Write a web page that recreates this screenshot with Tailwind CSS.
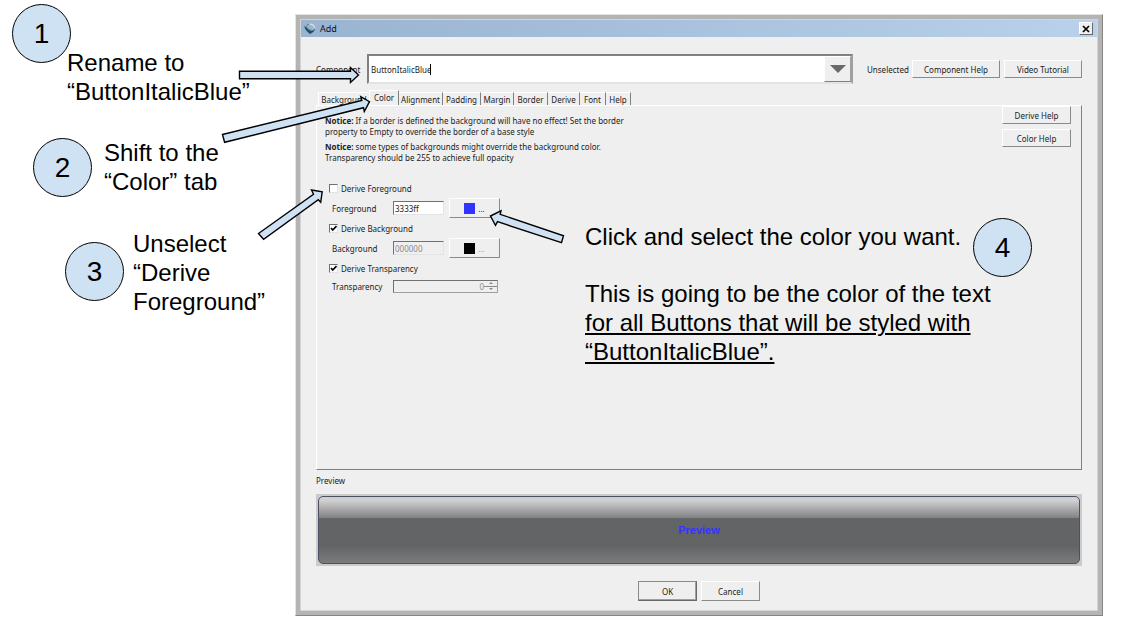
<!DOCTYPE html>
<html lang="en">
<head>
<meta charset="utf-8">
<title>Add</title>
<script src="https://cdn.jsdelivr.net/npm/@tailwindcss/browser@4"></script>
</head>
<body class="bg-white text-black">
<main class="relative flex min-h-screen items-start font-['Liberation_Sans',sans-serif]">

  <!-- Steps 1 to 3 -->
  <ol class="flex w-[295px] shrink-0 flex-col pt-1 text-2xl leading-[29px]">
    <li class="flex h-[134px] items-start pl-3">
      <span class="flex size-[59px] shrink-0 items-center justify-center rounded-full border border-black bg-[#cfe2f3] text-[28px]">1</span>
      <p class="-ml-1 pt-11">Rename to<br>“ButtonItalicBlue”</p>
    </li>
    <li class="flex h-[91px] items-start pl-[33px]">
      <span class="flex size-[59px] shrink-0 items-center justify-center rounded-full border border-black bg-[#cfe2f3] text-[28px]">2</span>
      <p class="pl-3">Shift to the<br>“Color” tab</p>
    </li>
    <li class="flex items-start pl-[65px]">
      <span class="mt-[13px] flex size-[59px] shrink-0 items-center justify-center rounded-full border border-black bg-[#cfe2f3] text-[28px]">3</span>
      <p class="pl-[9px]">Unselect<br>“Derive<br>Foreground”</p>
    </li>
  </ol>

  <!-- Dialog -->
  <section aria-label="Add" class="mt-[14px] mr-5 min-w-0 flex-1 border border-t-[#e3e3e3] border-l-[#e3e3e3] border-r-[#858585] border-b-[#858585] bg-[#b4b4b4] p-1 font-['Noto_Sans',sans-serif] text-[8px] leading-[11px] text-[#222]">
    <div class="border border-[#d4d4d4] bg-[#efefef]">
      <header class="flex h-[17px] items-center bg-linear-to-r from-[#99b4d1] to-[#b9d1ea] pr-1 pl-[3px]">
        <svg class="size-3" viewBox="0 0 12 12" fill="none" aria-hidden="true">
          <path d="M.5 2.800C.3 6 2.500 8.500 6 11 8.500 10 10.500 8.300 11 5.800 9 8 6.500 8.300 4.500 6.500 3 5.200 2 4 .5 2.800Z" fill="#1e4f68"/>
          <path d="M2 3.500C3.500 5.500 5 7 7.500 7" stroke="#4a8ba6"/>
          <path d="M6 1.200C8.500 1 10.300 2.500 10.500 5" stroke="#d9dccf" stroke-width="1.500"/>
          <path d="M2.500 2.500 4.500 1.500" stroke="#4d7186"/>
        </svg>
        <h1 class="ml-1 flex-1 text-[9px] text-[#111]">Add</h1>
        <button aria-label="Close" class="flex h-[13px] w-[14px] items-center justify-center border border-t-white border-l-white border-r-[#696969] border-b-[#696969] bg-[#efefef]">
          <svg class="size-2" viewBox="0 0 8 8" aria-hidden="true"><path d="M1 1 7 7M7 1 1 7" stroke="#000" stroke-width="1.700"/></svg>
        </button>
      </header>

      <div class="px-[15px] pt-[17px] pb-[9px]">
        <div class="flex items-center">
          <label for="component" class="w-[51px]">Component</label>
          <div class="flex h-[30px] min-w-0 flex-1 items-center border-2 border-t-[#808080] border-l-[#808080] border-r-[#a0a0a0] border-b-[#e3e3e3] bg-white">
            <input id="component" value="ButtonItalicBlue" class="h-[11px] w-[62px] border-r border-black bg-white pl-0.5 outline-none">
            <span class="flex-1"></span>
            <button aria-label="Show components" class="flex w-[27px] items-center justify-center self-stretch border border-t-white border-l-white border-r-[#a0a0a0] border-b-[#808080] bg-[#efefef]">
              <svg class="h-2 w-4" viewBox="0 0 16 8" aria-hidden="true"><path d="M0 0H16L8 8Z" fill="#696969"/></svg>
            </button>
          </div>
          <span class="ml-[14px] w-[45px]">Unselected</span>
          <button class="h-[18px] w-[88px] border border-t-white border-l-white border-r-[#8a8a8a] border-b-[#8a8a8a] bg-[#efefef]">Component Help</button>
          <button class="ml-1 h-[18px] w-[78px] border border-t-white border-l-white border-r-[#8a8a8a] border-b-[#8a8a8a] bg-[#efefef]">Video Tutorial</button>
        </div>

        <div role="tablist" class="mt-[6px] flex h-[15px] items-end pl-[2px]">
          <button role="tab" class="h-[13px] w-[51px] border-t border-l border-white">Background</button>
          <button role="tab" aria-selected="true" class="h-[15px] w-[30px] border-t border-l border-r border-t-white border-l-white border-r-[#808080] pb-[2px]">Color</button>
          <button role="tab" class="h-[13px] w-[44px] border-t border-r border-t-white border-r-[#808080]">Alignment</button>
          <button role="tab" class="h-[13px] w-[38px] border-t border-r border-t-white border-r-[#808080]">Padding</button>
          <button role="tab" class="h-[13px] w-[33px] border-t border-r border-t-white border-r-[#808080]">Margin</button>
          <button role="tab" class="h-[13px] w-[34px] border-t border-r border-t-white border-r-[#808080]">Border</button>
          <button role="tab" class="h-[13px] w-[32px] border-t border-r border-t-white border-r-[#808080]">Derive</button>
          <button role="tab" class="h-[13px] w-[26px] border-t border-r border-t-white border-r-[#808080]">Font</button>
          <button role="tab" class="h-[13px] w-[25px] border-t border-r border-t-white border-r-[#808080]">Help</button>
        </div>

        <div role="tabpanel" class="flex min-h-[365px] items-start justify-between border border-t-white border-l-white border-r-[#808080] border-b-[#808080] pr-[10px] pl-2">
          <div class="pt-[9px]">
            <p><b>Notice:</b> If a border is defined the background will have no effect! Set the border<br>property to Empty to override the border of a base style</p>
            <p class="mt-1"><b>Notice:</b> some types of backgrounds might override the background color.<br>Transparency should be 255 to achieve full opacity</p>

            <form class="mt-[15px] pl-1">
              <label class="flex h-5 items-center gap-[3px]">
                <input type="checkbox" class="size-[9px] appearance-none border border-t-[#707070] border-l-[#707070] border-r-[#e3e3e3] border-b-[#e3e3e3] bg-white">Derive Foreground
              </label>
              <div class="flex h-5 items-center pl-[3px]">
                <label for="fg" class="w-[61px]">Foreground</label>
                <input id="fg" value="3333ff" class="h-[14px] w-[51px] border border-t-[#707070] border-l-[#707070] border-r-[#e3e3e3] border-b-[#e3e3e3] bg-white pl-px">
                <button type="button" aria-label="Choose foreground" class="ml-[5px] flex h-5 w-[51px] items-center justify-center gap-[3px] border border-t-white border-l-white border-r-[#8a8a8a] border-b-[#8a8a8a] bg-[#efefef]"><span class="size-[11px] bg-[#3333ff]"></span>...</button>
              </div>
              <label class="flex h-5 items-center gap-[3px]">
                <span class="grid">
                  <input type="checkbox" checked class="peer col-start-1 row-start-1 size-[9px] appearance-none border border-t-[#707070] border-l-[#707070] border-r-[#e3e3e3] border-b-[#e3e3e3] bg-white">
                  <svg class="pointer-events-none col-start-1 row-start-1 hidden size-[9px] peer-checked:block" viewBox="0 0 9 9" fill="none" aria-hidden="true"><path d="M2 4 3.700 6 7.500 2.200" stroke="#000" stroke-width="1.700"/></svg>
                </span>Derive Background
              </label>
              <div class="flex h-5 items-center pl-[3px]">
                <label for="bg" class="w-[61px]">Background</label>
                <input id="bg" value="000000" disabled class="h-[14px] w-[51px] border border-t-[#707070] border-l-[#707070] border-r-[#e3e3e3] border-b-[#e3e3e3] bg-[#efefef] pl-px text-[#8c8c8c]">
                <button type="button" disabled aria-label="Choose background" class="ml-[5px] flex h-5 w-[51px] items-center justify-center gap-[3px] border border-t-white border-l-white border-r-[#8a8a8a] border-b-[#8a8a8a] bg-[#efefef] text-[#a0a0a0]"><span class="size-[11px] bg-black"></span>...</button>
              </div>
              <label class="flex h-5 items-center gap-[3px]">
                <span class="grid">
                  <input type="checkbox" checked class="peer col-start-1 row-start-1 size-[9px] appearance-none border border-t-[#707070] border-l-[#707070] border-r-[#e3e3e3] border-b-[#e3e3e3] bg-white">
                  <svg class="pointer-events-none col-start-1 row-start-1 hidden size-[9px] peer-checked:block" viewBox="0 0 9 9" fill="none" aria-hidden="true"><path d="M2 4 3.700 6 7.500 2.200" stroke="#000" stroke-width="1.700"/></svg>
                </span>Derive Transparency
              </label>
              <div class="flex h-4 items-center pl-[3px]">
                <label for="alpha" class="w-[61px]">Transparency</label>
                <div class="flex h-[13px] w-[105px] border border-t-[#707070] border-l-[#707070] border-r-[#a0a0a0] border-b-[#a0a0a0]">
                  <input id="alpha" value="0" disabled class="min-w-0 flex-1 text-right text-[#8c8c8c]">
                  <div class="flex w-[13px] flex-col">
                    <button type="button" disabled aria-label="Increase" class="flex flex-1 items-center justify-center border-b border-[#8a8a8a]"><svg class="h-[2px] w-1" viewBox="0 0 4 2" aria-hidden="true"><path d="M0 2 2 0 4 2Z" fill="#8a8a8a"/></svg></button>
                    <button type="button" disabled aria-label="Decrease" class="flex flex-1 items-center justify-center"><svg class="h-[2px] w-1" viewBox="0 0 4 2" aria-hidden="true"><path d="M0 0 2 2 4 0Z" fill="#8a8a8a"/></svg></button>
                  </div>
                </div>
              </div>
            </form>
          </div>
          <div class="flex w-[69px] flex-col gap-[5px]">
            <button class="h-[18px] border border-t-white border-l-white border-r-[#8a8a8a] border-b-[#8a8a8a] bg-[#efefef]">Derive Help</button>
            <button class="h-[18px] border border-t-white border-l-white border-r-[#8a8a8a] border-b-[#8a8a8a] bg-[#efefef]">Color Help</button>
          </div>
        </div>

        <h2 class="mt-[5px]">Preview</h2>
        <div class="mt-2 bg-[#cbcbcb] p-[2px]">
          <button class="block h-[68px] w-full rounded-[5px] border border-[#4b5063] bg-[linear-gradient(#d0d0d0_5%,#808184_32%,#636466_32%,#636466_74%,#7a7b7d)] font-['Liberation_Sans',sans-serif] text-[11px] font-bold text-[#3333ff]">Preview</button>
        </div>

        <footer class="mt-[15px] flex justify-center gap-1">
          <button class="h-5 w-[59px] border border-t-[#8a8a8a] border-l-[#8a8a8a] border-r-[#696969] border-b-[#696969] bg-[#efefef] shadow-[inset_-1px_-1px_0_#a0a0a0]">OK</button>
          <button class="h-5 w-[59px] border border-t-white border-l-white border-r-[#8a8a8a] border-b-[#8a8a8a] bg-[#efefef]">Cancel</button>
        </footer>
      </div>
    </div>
  </section>

  <!-- Step 4, laid over the dialog -->
  <div class="absolute top-[218px] left-[585px] flex items-start text-2xl leading-[29px]">
    <div class="w-[420px] pt-1">
      <p>Click and select the color you want.</p>
      <p class="mt-7">This is going to be the color of the text<br><u class="decoration-2 underline-offset-2">for all Buttons that will be styled with</u><br><u class="decoration-2 underline-offset-2">“ButtonItalicBlue”.</u></p>
    </div>
    <span class="-ml-8 flex size-[59px] shrink-0 items-center justify-center rounded-full border border-black bg-[#cfe2f3] text-[28px]">4</span>
  </div>

  <!-- Arrows from the steps to the controls -->
  <svg class="pointer-events-none absolute top-0 left-0" width="1123" height="638" viewBox="0 0 1123 638" fill="#cfe2f3" stroke="#000" stroke-width="1.400" aria-hidden="true">
    <path d="M239.500 71.300H350.500V67.500L358.500 75 350.500 82.500V78.700H239.500Z"/>
    <path d="M222.500 134.500 361.800 100.500 360.800 96.700 369.500 101.700 364.300 111.500 363.500 107.700 224.600 142.300Z"/>
    <path d="M258.500 233.500 313.500 194.300 311.500 190 322.200 191.800 320.700 202.300 318.300 199.700 263.600 239.300Z"/>
    <path d="M490.500 216 501 210.800 500.200 214.300 563.500 235.800 561.500 242.700 497.500 221.700 495.500 225.300Z"/>
  </svg>
</main>
</body>
</html>
